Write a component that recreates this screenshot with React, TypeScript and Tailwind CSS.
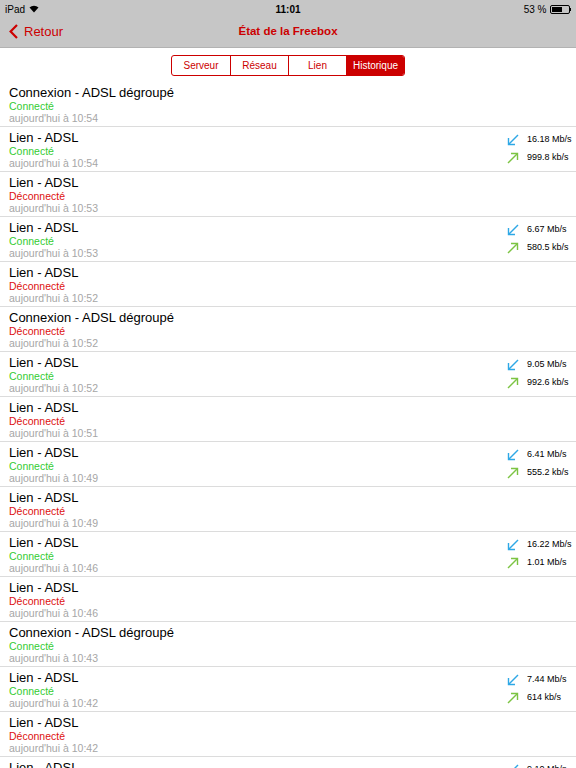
import React from 'react';

type Row = {
  title: string;
  ok: boolean;
  time: string;
  down?: string;
  up?: string;
};

const rows: Row[] = [
  { title: 'Connexion - ADSL dégroupé', ok: true, time: '10:54' },
  { title: 'Lien - ADSL', ok: true, time: '10:54', down: '16.18 Mb/s', up: '999.8 kb/s' },
  { title: 'Lien - ADSL', ok: false, time: '10:53' },
  { title: 'Lien - ADSL', ok: true, time: '10:53', down: '6.67 Mb/s', up: '580.5 kb/s' },
  { title: 'Lien - ADSL', ok: false, time: '10:52' },
  { title: 'Connexion - ADSL dégroupé', ok: false, time: '10:52' },
  { title: 'Lien - ADSL', ok: true, time: '10:52', down: '9.05 Mb/s', up: '992.6 kb/s' },
  { title: 'Lien - ADSL', ok: false, time: '10:51' },
  { title: 'Lien - ADSL', ok: true, time: '10:49', down: '6.41 Mb/s', up: '555.2 kb/s' },
  { title: 'Lien - ADSL', ok: false, time: '10:49' },
  { title: 'Lien - ADSL', ok: true, time: '10:46', down: '16.22 Mb/s', up: '1.01 Mb/s' },
  { title: 'Lien - ADSL', ok: false, time: '10:46' },
  { title: 'Connexion - ADSL dégroupé', ok: true, time: '10:43' },
  { title: 'Lien - ADSL', ok: true, time: '10:42', down: '7.44 Mb/s', up: '614 kb/s' },
  { title: 'Lien - ADSL', ok: false, time: '10:42' },
  { title: 'Lien - ADSL', ok: true, time: '10:41', down: '9.10 Mb/s', up: '990.1 kb/s' },
];

function DownArrow() {
  return (
    <svg width="12" height="12" viewBox="0 0 12 12" fill="none" stroke="#2ea8e6" strokeWidth="1.4">
      <path d="M11 1 L1.5 10.5" />
      <path d="M1.5 4 V10.5 H8" />
    </svg>
  );
}

function UpArrow() {
  return (
    <svg width="12" height="12" viewBox="0 0 12 12" fill="none" stroke="#7cc443" strokeWidth="1.4">
      <path d="M1 11 L10.5 1.5" />
      <path d="M4 1.5 H10.5 V8" />
    </svg>
  );
}

function Segments() {
  const items = ['Serveur', 'Réseau', 'Lien', 'Historique'];
  return (
    <div className="flex justify-center pt-[7px] pb-[6px] bg-white">
      <div className="flex h-[21px] border border-[#cc0000] rounded-[3px] overflow-hidden">
        {items.map((it, i) => (
          <div
            key={it}
            className={
              'w-[58px] flex items-center justify-center text-[10px] ' +
              (i > 0 ? 'border-l border-[#cc0000] ' : '') +
              (i === 3 ? 'bg-[#cc0000] text-white' : 'text-[#cc0000]')
            }
          >
            {it}
          </div>
        ))}
      </div>
    </div>
  );
}

export default function App() {
  return (
    <div className="w-[576px] h-[768px] overflow-hidden bg-white" style={{ fontFamily: '"Liberation Sans", Arial, sans-serif' }}>
      <div className="bg-[#c6c6c6] border-b border-[#b2b2b2]">
        <div className="h-[18px] flex items-center justify-between px-[5px] text-[10px] text-black">
          <div className="flex items-center gap-[4px] w-[100px]">
            <span>iPad</span>
            <svg width="10" height="8" viewBox="0 0 10 8">
              <path d="M5 7.5 L0.5 2.6 A6.5 6.5 0 0 1 9.5 2.6 Z" fill="#000" />
            </svg>
          </div>
          <span className="font-bold">11:01</span>
          <div className="flex items-center justify-end gap-[3px] w-[100px]">
            <span>53 %</span>
            <div className="flex items-center">
              <div className="w-[20px] h-[9px] border border-black rounded-[2px] p-[1px]">
                <div className="h-full w-[10px] bg-black" />
              </div>
              <div className="w-[1.5px] h-[3px] bg-black" />
            </div>
          </div>
        </div>
        <div className="h-[27px] mb-[2px] relative flex items-center justify-center">
          <div className="absolute left-[9px] top-0 h-full flex items-center gap-[6px] text-[#cc0000] text-[13px]">
            <svg width="9" height="15" viewBox="0 0 9 15" fill="none" stroke="#cc0000" strokeWidth="2.2">
              <path d="M8 1 L1.6 7.5 L8 14" />
            </svg>
            <span>Retour</span>
          </div>
          <span className="text-[#cc0000] text-[11.5px] font-bold">État de la Freebox</span>
        </div>
      </div>
      <Segments />
      <div>
        {rows.map((r, i) => (
          <div key={i} className="pl-[9px] h-[45px] border-b border-[#dcdcdc] flex">
            <div className="flex-1 flex flex-col pt-[3px]">
              <div className="text-[13px] leading-[15px] text-black">{r.title}</div>
              <div className={'text-[10.5px] leading-[12px] ' + (r.ok ? 'text-[#33cc33]' : 'text-[#dd1111]')}>
                {r.ok ? 'Connecté' : 'Déconnecté'}
              </div>
              <div className="text-[10.5px] leading-[13px] text-[#a6a6a6]">aujourd'hui à {r.time}</div>
            </div>
            {r.down && (
              <div className="w-[69px] flex flex-col pt-[7px] gap-[6px] text-[9px] text-black">
                <div className="flex items-center gap-[8px] h-[12px]">
                  <DownArrow />
                  <span>{r.down}</span>
                </div>
                <div className="flex items-center gap-[8px] h-[12px]">
                  <UpArrow />
                  <span>{r.up}</span>
                </div>
              </div>
            )}
          </div>
        ))}
      </div>
    </div>
  );
}
